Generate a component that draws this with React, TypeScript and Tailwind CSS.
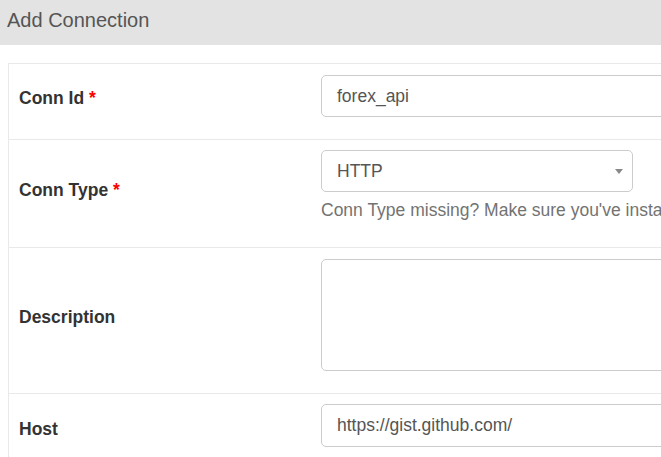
import React from "react";

const font = { fontFamily: '"Liberation Sans", Arial, sans-serif' };

function Label({ text, required }: { text: string; required?: boolean }) {
  return (
    <div className="w-[302px] shrink-0 flex items-center pl-[10px] pb-[6px]">
      <span className="text-[17.5px] font-bold text-[#333]">
        {text}
        {required && <span className="text-[#ff0000]"> *</span>}
      </span>
    </div>
  );
}

export default function App() {
  return (
    <div className="w-[661px] h-[457px] overflow-hidden bg-white" style={font}>
      <div className="h-[45px] bg-[#e3e3e3] flex items-center pl-[7px] pb-[5px]">
        <span className="text-[20px] text-[#555]">Add Connection</span>
      </div>
      <div className="mt-[18px] ml-[8px] w-[800px] border-l border-t border-[#e9e9e9]">
        {/* Conn Id */}
        <div className="flex h-[76px] border-b border-[#e9e9e9]">
          <Label text="Conn Id" required />
          <div className="pl-[10px] pt-[11px]">
            <div className="w-[420px] h-[42px] border border-[#ccc] rounded-[5px] flex items-center pl-[15px] text-[17.5px] text-[#555]">
              forex_api
            </div>
          </div>
        </div>
        {/* Conn Type */}
        <div className="flex h-[108px] border-b border-[#e9e9e9]">
          <Label text="Conn Type" required />
          <div className="pl-[10px] pt-[10px]">
            <div className="relative w-[312px] h-[42px] border border-[#ccc] rounded-[5px] flex items-center pl-[15px] text-[17.5px] text-[#555]">
              HTTP
              <svg
                className="absolute right-[9px] top-[18px]"
                width="8"
                height="5"
                viewBox="0 0 8 5"
              >
                <polygon points="0,0 8,0 4,5" fill="#888" />
              </svg>
            </div>
            <div className="mt-[6px] text-[17.5px] leading-[25px] text-[#737373] whitespace-nowrap">
              Conn Type missing? Make sure you've installed the corresponding Airflow Provider Package.
            </div>
          </div>
        </div>
        {/* Description */}
        <div className="flex h-[146px] border-b border-[#e9e9e9]">
          <Label text="Description" />
          <div className="pl-[10px] pt-[11px]">
            <div className="w-[420px] h-[112px] border border-[#ccc] rounded-[5px]" />
          </div>
        </div>
        {/* Host */}
        <div className="flex h-[90px]">
          <div className="w-[302px] shrink-0 flex items-start pl-[10px] pt-[22px]">
            <span className="text-[17.5px] font-bold text-[#333]">Host</span>
          </div>
          <div className="pl-[10px] pt-[10px]">
            <div className="w-[420px] h-[43px] border border-[#ccc] rounded-[5px] flex items-center pl-[15px] text-[17.5px] text-[#555]">
              https://gist.github.com/
            </div>
          </div>
        </div>
      </div>
    </div>
  );
}
